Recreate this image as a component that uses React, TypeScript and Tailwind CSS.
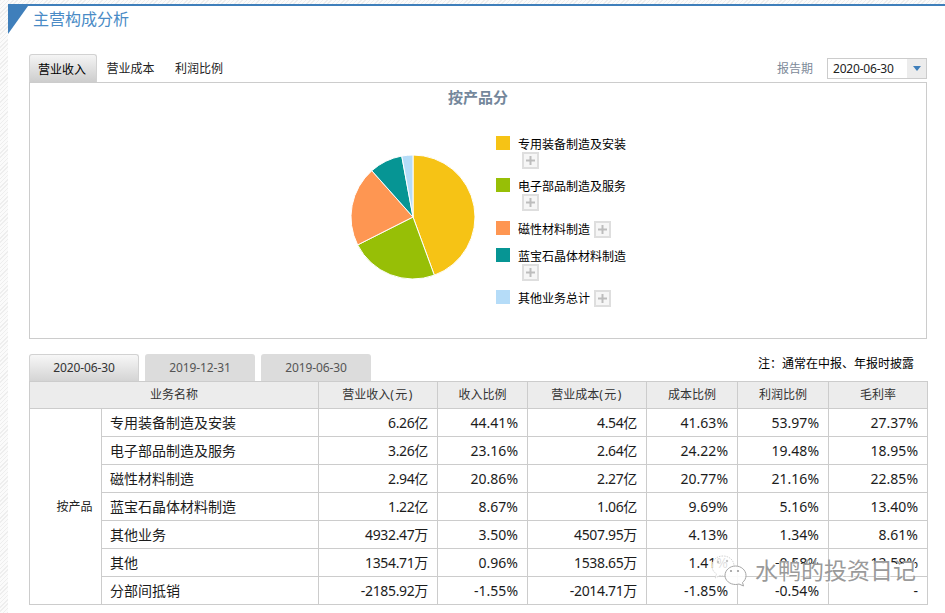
const rows = [
  ["专用装备制造及安装", "6.26亿", "44.41%", "4.54亿", "41.63%", "53.97%", "27.37%"],
  ["电子部品制造及服务", "3.26亿", "23.16%", "2.64亿", "24.22%", "19.48%", "18.95%"],
  ["磁性材料制造", "2.94亿", "20.86%", "2.27亿", "20.77%", "21.16%", "22.85%"],
  ["蓝宝石晶体材料制造", "1.22亿", "8.67%", "1.06亿", "9.69%", "5.16%", "13.40%"],
  ["其他业务", "4932.47万", "3.50%", "4507.95万", "4.13%", "1.34%", "8.61%"],
  ["其他", "1354.71万", "0.96%", "1538.65万", "1.41%", "-0.58%", "12.58%"],
  ["分部间抵销", "-2185.92万", "-1.55%", "-2014.71万", "-1.85%", "-0.54%", "-"],
];

const slices = [
  { v: 44.41, c: "#f6c315" },
  { v: 23.16, c: "#97bf06" },
  { v: 20.86, c: "#fe9652" },
  { v: 8.67, c: "#069594" },
  { v: 2.9, c: "#b5dcf8" },
];

function Pie() {
  const cx = 64;
  const cy = 64;
  const r = 62;
  const total = slices.reduce((s, x) => s + x.v, 0);
  let acc = 0;
  return (
    <svg width="128" height="128" viewBox="0 0 128 128">
      {slices.map((s) => {
        const a0 = (acc / total) * 2 * Math.PI;
        acc += s.v;
        const a1 = (acc / total) * 2 * Math.PI;
        const x0 = cx + r * Math.sin(a0);
        const y0 = cy - r * Math.cos(a0);
        const x1 = cx + r * Math.sin(a1);
        const y1 = cy - r * Math.cos(a1);
        const large = a1 - a0 > Math.PI ? 1 : 0;
        return (
          <path
            key={s.c}
            d={`M${cx} ${cy}L${x0} ${y0}A${r} ${r} 0 ${large} 1 ${x1} ${y1}Z`}
            fill={s.c}
            stroke="#fff"
            strokeWidth="1"
            strokeLinejoin="round"
          />
        );
      })}
    </svg>
  );
}

function PlusBox({ className }: { className: string }) {
  return (
    <span className={`flex h-[17px] w-[17px] items-center justify-center border-2 border-[#dedede] bg-[#f6f6f6] ${className}`}>
      <svg width="9" height="9" viewBox="0 0 9 9">
        <path d="M4.500 0v9M0 4.500h9" stroke="#bdbdbd" strokeWidth="2" />
      </svg>
    </span>
  );
}

function LegendItem({ color, label, inline, mb }: { color: string; label: string; inline?: boolean; mb: string }) {
  return (
    <div className={`flex gap-2 ${mb}`}>
      <span className={`h-[14px] w-[14px] shrink-0 ${color}`} />
      {inline ? (
        <div className="flex items-start">
          <span className="h-[16px] text-[12px] leading-[18px] text-black">{label}</span>
          <PlusBox className="ml-[4px]" />
        </div>
      ) : (
        <div className="flex flex-col">
          <span className="h-[16px] text-[12px] leading-[18px] text-black">{label}</span>
          <PlusBox className="ml-[4px]" />
        </div>
      )}
    </div>
  );
}

function DateTab({ label, active }: { label: string; active?: boolean }) {
  return (
    <div
      className={
        active
          ? "flex h-[27px] w-[110px] items-center justify-center rounded-t-[3px] border border-b-0 border-[#d2d2d2] bg-gradient-to-b from-[#f7f7f7] to-[#d4d4d4] text-[12px] tracking-[-0.1px] text-[#333]"
          : "flex h-[27px] w-[110px] items-center justify-center rounded-t-[3px] bg-[#dcdcdc] text-[12px] tracking-[-0.1px] text-[#555]"
      }
    >
      {label}
    </div>
  );
}

export default function App() {
  const th = "border border-[#cccccc] bg-[#ececec] text-center align-middle text-[12px] font-normal text-[#333] p-0";
  const pct = "border border-[#cccccc] px-[9px] text-right align-middle text-[14px] text-[#1c1c1c]";
  const amt = "border border-[#cccccc] px-[9px] text-right align-middle text-[14px] tracking-[-0.35px] text-[#1c1c1c]";
  return (
    <div
      className="relative h-[613px] w-[945px] overflow-hidden bg-[#f5f5f5] bg-[repeating-linear-gradient(135deg,#eeeeee_0px,#eeeeee_1px,#fbfbfb_1px,#fbfbfb_3px)] pl-[8px] pt-[4px]"
      style={{ fontFamily: '"Noto Sans", "Noto Sans CJK SC", sans-serif' }}
    >
      <div className="h-full w-full border-t-2 border-[#3f7fbb] bg-white">
        <div className="relative h-[27px]">
          <svg className="absolute left-0 top-0" width="20" height="28" viewBox="0 0 20 28">
            <path d="M0 0H20L0 28Z" fill="#3f7fbb" />
          </svg>
          <div className="pl-[25px] text-[16px] leading-[27px] text-[#4a8bc6]">主营构成分析</div>
        </div>

        <div className="mx-[21px] mt-[21px] w-[898px]">
          <div className="flex h-[28px] items-end justify-between">
            <div className="flex h-[28px] text-[12px] text-[#222]">
              <div className="flex h-[28px] w-[68px] items-center justify-center rounded-t-[3px] border border-b-0 border-[#d2d2d2] bg-gradient-to-b from-[#f5f5f5] to-[#cdcdcd] pr-[2px] pt-[2px] text-black">
                营业收入
              </div>
              <div className="flex w-[68px] items-center justify-center pr-[1px] pt-[2px]">营业成本</div>
              <div className="flex w-[68px] items-center justify-center pt-[2px]">利润比例</div>
            </div>
            <div className="mb-[3px] flex items-center">
              <span className="mr-[14px] text-[12px] text-[#7d8a99]">报告期</span>
              <div className="flex h-[21px] w-[100px] items-stretch border border-[#cccccc] bg-white">
                <span className="flex-1 pl-[5px] text-[12px] leading-[19px] tracking-[-0.2px] text-[#222]">2020-06-30</span>
                <span className="flex w-[19px] items-center justify-center bg-[#ececec]">
                  <svg width="8" height="5" viewBox="0 0 8 5">
                    <path d="M0 0H8L4 5Z" fill="#3f7fbb" />
                  </svg>
                </span>
              </div>
            </div>
          </div>

          <div className="h-[257px] w-[898px] border border-[#cccccc]">
            <div className="mb-[1px] pt-[4px] text-center text-[15px] font-bold leading-[20px] text-[#74879b]">按产品分</div>
            <div className="flex">
              <div className="ml-[319px] mt-[45px]">
                <Pie />
              </div>
              <div className="ml-[19px] mt-[28px] flex flex-col">
                <LegendItem color="bg-[#f6c315]" label="专用装备制造及安装" mb="mb-[9px]" />
                <LegendItem color="bg-[#97bf06]" label="电子部品制造及服务" mb="mb-[10px]" />
                <LegendItem color="bg-[#fe9652]" label="磁性材料制造" inline mb="mb-[10px]" />
                <LegendItem color="bg-[#069594]" label="蓝宝石晶体材料制造" mb="mb-[9px]" />
                <LegendItem color="bg-[#b5dcf8]" label="其他业务总计" inline mb="mb-0" />
              </div>
            </div>
          </div>

          <div className="mt-[15px] flex h-[27px] items-end justify-between">
            <div className="flex gap-[6px]">
              <DateTab label="2020-06-30" active />
              <DateTab label="2019-12-31" />
              <DateTab label="2019-06-30" />
            </div>
            <div className="mb-[9px] mr-[13px] text-[12px] leading-[17px] text-black">注：通常在中报、年报时披露</div>
          </div>

          <table className="w-[898px] table-fixed border-collapse">
            <colgroup>
              <col className="w-[72px]" />
              <col className="w-[217px]" />
              <col className="w-[119px]" />
              <col className="w-[90px]" />
              <col className="w-[119px]" />
              <col className="w-[91px]" />
              <col className="w-[91px]" />
              <col className="w-[99px]" />
            </colgroup>
            <thead>
              <tr className="h-[27px]">
                <th colSpan={2} className={th}>业务名称</th>
                <th className={th}>营业收入<span className="tracking-[1.5px]">(元)</span></th>
                <th className={th}>收入比例</th>
                <th className={th}>营业成本<span className="tracking-[1.5px]">(元)</span></th>
                <th className={th}>成本比例</th>
                <th className={th}>利润比例</th>
                <th className={th}>毛利率</th>
              </tr>
            </thead>
            <tbody>
              {rows.map((r, i) => (
                <tr key={r[0]} className="h-[28px]">
                  {i === 0 && (
                    <td rowSpan={7} className="border border-[#cccccc] pl-[18px] text-center align-middle text-[12px] text-[#222]">
                      按产品
                    </td>
                  )}
                  <td className="border border-[#cccccc] px-[8px] text-left align-middle text-[14px] text-[#1c1c1c]">{r[0]}</td>
                  {r.slice(1).map((c, j) => (
                    <td key={j} className={j === 0 || j === 2 ? amt : pct}>{c}</td>
                  ))}
                </tr>
              ))}
            </tbody>
          </table>
        </div>
      </div>

      <div className="absolute left-[711px] top-[553px] flex items-start">
        <svg width="36" height="36" viewBox="0 0 36 36" fill="none">
          <path d="M12 3C6 3 1 7 1 13c0 3.500 1.700 6 4.500 8l-1.500 4 5-2.500c1.500.4 3 .5 4.500.5C23 23 24 14 23 13 23 7 18 3 12 3Z" fill="#ffffff" fillOpacity=".85" stroke="#d4d4d4" strokeWidth="1" strokeDasharray="1.500 1" />
          <circle cx="7" cy="9" r="1.200" fill="#c4c4c4" />
          <circle cx="16" cy="8" r="1.200" fill="#c4c4c4" />
          <path d="M24.500 13C30 13 35 17 35 22.500c0 3-1.500 5.500-3.500 7l1 3.500-4.500-2c-1 .3-2.300.5-3.500.5C19 31.500 14 27.500 14 22.500 14 17 19 13 24.500 13Z" fill="#ffffff" fillOpacity=".9" stroke="#a6a6a6" strokeWidth="1" />
          <circle cx="20" cy="18" r="1.100" fill="#9d9d9d" />
          <circle cx="27" cy="18" r="1.100" fill="#9d9d9d" />
        </svg>
        <span className="ml-[8px] mt-[2px] h-[30px] w-[160px] whitespace-nowrap bg-[linear-gradient(transparent_9px,#ffffff_9px,#ffffff_20px,transparent_20px)] text-[23px] leading-[30px] text-[#9a9a9a] [text-shadow:1px_1px_0_#ffffff]">水鸭的投资日记</span>
      </div>
    </div>
  );
}
